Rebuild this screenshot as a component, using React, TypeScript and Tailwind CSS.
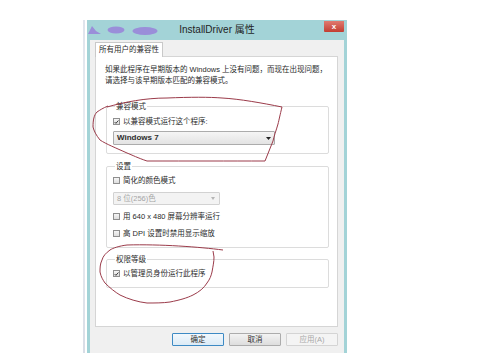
import type { ReactNode } from "react";

const FONT = { fontFamily: '"Liberation Sans","Noto Sans CJK SC",sans-serif' };

function CheckBox({ checked }: { checked?: boolean }) {
  return (
    <span className="flex h-[7px] w-[7px] shrink-0 items-center justify-center border border-[#8f8f8f] bg-gradient-to-b from-[#f6f6f6] to-[#dedede]">
      {checked ? (
        <svg width="6" height="6" viewBox="0 0 6 6">
          <path d="M0.8 3.1 L2.3 4.6 L5.3 1.2" fill="none" stroke="#2b2b2b" strokeWidth="1.1" />
        </svg>
      ) : null}
    </span>
  );
}

function Row({ checked, label, className = "" }: { checked?: boolean; label: string; className?: string }) {
  return (
    <div className={`flex h-[11px] items-center gap-[3px] ${className}`}>
      <CheckBox checked={checked} />
      <span className="whitespace-nowrap text-[7.5px] leading-[11px] text-[#2a2a2a]">{label}</span>
    </div>
  );
}

function Group({ title, children, className = "" }: { title: string; children: ReactNode; className?: string }) {
  return (
    <fieldset className={`ml-[10px] mr-[8px] rounded-[2px] border border-[#dcdcdc] pb-[8px] pl-[6px] ${className}`}>
      <legend className="ml-[2px] px-[1px] text-[7.5px] leading-[11px] text-[#2a2a2a]">{title}</legend>
      {children}
    </fieldset>
  );
}

function Button({ label, primary, disabled }: { label: string; primary?: boolean; disabled?: boolean }) {
  const tone = primary
    ? "border-[#3d8ac4] bg-gradient-to-b from-[#f2f8fd] to-[#dcebf6] text-[#333]"
    : disabled
      ? "border-[#d4d4d4] bg-[#f4f4f4] text-[#a8a8a8]"
      : "border-[#acacac] bg-gradient-to-b from-[#f3f3f3] to-[#dddddd] text-[#333]";
  return (
    <div className={`flex h-[13px] w-[52px] items-center justify-center rounded-[1px] border text-[7.5px] ${tone}`}>
      {label}
    </div>
  );
}

function Annotations() {
  return (
    <svg className="pointer-events-none absolute left-0 top-0" width="500" height="353" viewBox="0 0 500 353">
      <path
        d="M107 107 C 125 102, 145 98, 167 98 C 190 97, 210 97, 222 98 C 240 99, 262 103, 282 107 C 280 115, 279 120, 278 124 C 276 131, 274 136, 273 141 C 270 148, 268 154, 265 161 C 230 161, 190 161, 147 161 C 138 158, 132 155, 127 153 C 116 148, 106 144, 100 140 C 96 135, 94 131, 93 127 C 93 120, 94 115, 97 112 C 100 110, 103 108, 108 106"
        fill="none"
        stroke="#9b3b4a"
        strokeWidth="1"
      />
      <path
        d="M223 250 C 200 247, 160 244, 127 245 C 119 246, 113 248, 110 250 C 106 253, 103 256, 102 260 C 100 264, 100 268, 100 272 C 101 277, 103 280, 105 283 C 110 288, 115 292, 120 295 C 128 299, 138 302, 147 303 C 155 303, 163 303, 170 302 C 180 300, 187 298, 193 295 C 199 292, 204 288, 207 283 C 210 279, 211 276, 212 272 C 213 266, 214 262, 214 257 C 214 255, 213 253, 213 251"
        fill="none"
        stroke="#9b3b4a"
        strokeWidth="1"
      />
    </svg>
  );
}

function TitleBar() {
  return (
    <div className="grid h-[20px] grid-cols-[1fr_auto_1fr] items-center bg-[#a3d3d7]">
      <div className="flex items-center">
        <svg width="80" height="20" viewBox="0 0 80 20">
          <defs>
            <filter id="smudge" x="-20%" y="-50%" width="140%" height="200%">
              <feGaussianBlur stdDeviation="0.5" />
            </filter>
          </defs>
          <g fill="#9a8ed9" filter="url(#smudge)">
            <path d="M1 14 L5 6 L9 11 L14 14 Z" />
            <ellipse cx="29" cy="10" rx="8.5" ry="3.4" />
            <ellipse cx="58" cy="11" rx="12.5" ry="4" />
          </g>
        </svg>
      </div>
      <span className="whitespace-nowrap text-[10px] leading-[20px] text-[#1f1f1f]">InstallDriver 属性</span>
      <div className="flex justify-end self-start pr-[3px] pt-[1px]">
        <div className="flex h-[11px] w-[20px] items-center justify-center rounded-b-[1px] bg-gradient-to-b from-[#e07a70] to-[#c23c31] text-[8px] font-bold leading-none text-white">
          x
        </div>
      </div>
    </div>
  );
}

export default function App() {
  return (
    <div style={FONT} className="relative flex h-[353px] w-[500px] overflow-hidden bg-white">
      <div className="ml-[83px] mt-[20px] w-[2px] bg-gradient-to-b from-[#dfe4ec] via-[#eef0f4] to-[#d8dde6]" />
      <div className="ml-[2px] mt-[20px] flex w-[260px] flex-col">
        <TitleBar />
        <div className="flex flex-1 flex-col border-x-[3px] border-[#a3d3d7] bg-[#f0f0f0] pl-[5px] pr-[6px] pt-[2px]">
          <div className="relative z-10 -mb-px flex h-[15px] w-[68px] items-center justify-center border border-b-0 border-[#c9c9c9] bg-white text-[7.5px] text-[#2a2a2a]">
            所有用户的兼容性
          </div>
          <div className="h-[271px] border border-[#d5d5d5] bg-white">
            <p className="pl-[9px] pt-[7px] text-[7.5px] leading-[11px] text-[#2a2a2a]">
              如果此程序在早期版本的 Windows 上没有问题，而现在出现问题，
              <br />
              请选择与该早期版本匹配的兼容模式。
            </p>
            <Group title="兼容模式" className="mt-[15px]">
              <Row checked label="以兼容模式运行这个程序:" className="mt-[4px]" />
              <div className="mt-[4px] flex h-[14px] w-[162px] items-center justify-between rounded-[1px] border border-[#acacac] bg-gradient-to-b from-[#f5f5f5] to-[#e3e3e3] pl-[3px] pr-[3px]">
                <span className="text-[8px] font-semibold text-[#2d2d2d]">Windows 7</span>
                <svg width="5" height="3" viewBox="0 0 5 3">
                  <path d="M0 0 H5 L2.5 3 Z" fill="#222" />
                </svg>
              </div>
            </Group>
            <Group title="设置" className="mt-[7px]">
              <Row label="简化的颜色模式" className="mt-[3px]" />
              <div className="mt-[6px] flex h-[13px] w-[107px] items-center justify-between rounded-[1px] border border-[#d2d2d2] bg-[#f3f3f3] pl-[3px] pr-[4px]">
                <span className="text-[7.5px] text-[#a6a6a6]">8 位(256)色</span>
                <svg width="4" height="3" viewBox="0 0 4 3">
                  <path d="M0 0 H4 L2 3 Z" fill="#b5b5b5" />
                </svg>
              </div>
              <Row label="用 640 x 480 屏幕分辨率运行" className="mt-[6px]" />
              <Row label="高 DPI 设置时禁用显示缩放" className="mt-[6px]" />
            </Group>
            <Group title="权限等级" className="mt-[6px]">
              <Row checked label="以管理员身份运行此程序" className="mt-[3px]" />
            </Group>
          </div>
          <div className="mt-[6px] flex justify-end gap-[5px]">
            <Button label="确定" primary />
            <Button label="取消" />
            <Button label="应用(A)" disabled />
          </div>
        </div>
      </div>
      <Annotations />
    </div>
  );
}
